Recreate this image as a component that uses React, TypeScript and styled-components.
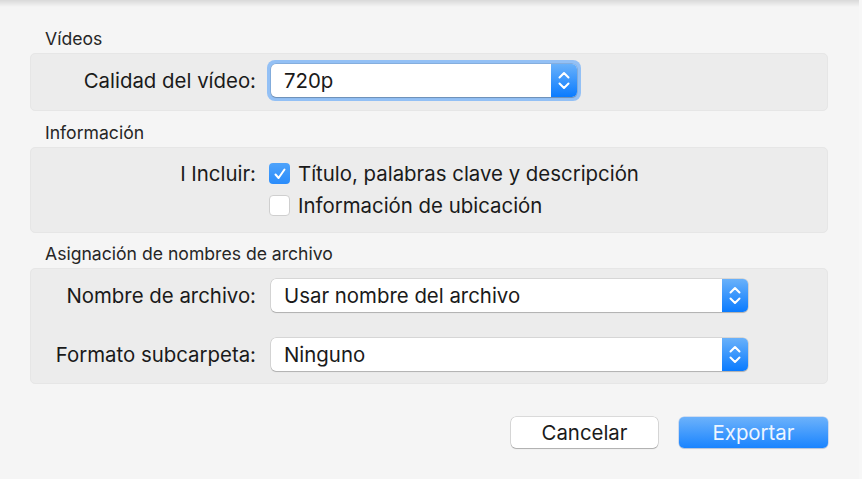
import React from "react";
import styled, { createGlobalStyle } from "styled-components";

const Global = createGlobalStyle`
  html, body { margin: 0; padding: 0; background: #f5f5f5; }
  body { font-family: "Inter", "Liberation Sans", sans-serif; color: #222; }
`;

const Window = styled.div`
  position: relative;
  width: 862px;
  height: 479px;
  box-sizing: border-box;
  background: #f5f5f5;
  padding: 29px 31px 0 30px;
  overflow: hidden;
  border-right: 3px solid #f7f7f7;
  &::before {
    content: "";
    position: absolute;
    left: 0; right: 0; top: 0;
    height: 7px;
    background: linear-gradient(#d9d9d9, rgba(245,245,245,0));
  }
`;

const SectionTitle = styled.div<{ $mt?: number }>`
  font-size: 17.6px;
  line-height: 20px;
  height: 20px;
  padding-left: 15px;
  margin-top: ${(p) => p.$mt ?? 0}px;
  margin-bottom: 4px;
  color: #262626;
`;

const Box = styled.div<{ $pt: number; $pb: number; $gap: number }>`
  background: #ececec;
  border: 1px solid #e6e6e6;
  border-radius: 5px;
  padding: ${(p) => p.$pt}px 0 ${(p) => p.$pb}px 0;
  display: grid;
  grid-template-columns: 225px 1fr;
  column-gap: 15px;
  row-gap: ${(p) => p.$gap}px;
  align-items: center;
`;

const Label = styled.div<{ $top?: boolean }>`
  font-size: 20.4px;
  line-height: ${(p) => (p.$top ? "21px" : "24px")};
  align-self: ${(p) => (p.$top ? "start" : "center")};
  text-align: right;
  color: #1a1a1a;
`;

const Ring = styled.div`
  width: 306px;
  padding: 4px;
  margin-left: -4px;
  border-radius: 8px;
  background: #93c0f5;
`;

const SelectBox = styled.div<{ $w?: number }>`
  box-sizing: border-box;
  display: flex;
  align-items: stretch;
  width: ${(p) => (p.$w ? `${p.$w}px` : "100%")};
  height: 33px;
  background: #fff;
  border-radius: 5px;
  box-shadow: 0 0 0 0.5px rgba(0,0,0,0.18), 0 1px 1px rgba(0,0,0,0.18);
  overflow: hidden;
`;

const SelectText = styled.div`
  flex: 1;
  font-size: 20.4px;
  line-height: 33px;
  padding-left: 13px;
  color: #1a1a1a;
`;

const Stepper = styled.div`
  width: 26px;
  display: flex;
  background: linear-gradient(#69b1fa, #0a7bff);
`;

const Checks = styled.div`
  display: flex;
  flex-direction: column;
  gap: 11px;
  margin-left: -2px;
`;

const CheckRow = styled.div`
  display: flex;
  align-items: center;
  gap: 8px;
  font-size: 20.4px;
  color: #1a1a1a;
  height: 21px;
`;

const Check = styled.div<{ $on?: boolean }>`
  box-sizing: border-box;
  flex: none;
  width: 21px;
  height: 21px;
  border-radius: 4px;
  display: flex;
  align-items: center;
  justify-content: center;
  background: ${(p) => (p.$on ? "linear-gradient(#4ea3fb, #2a8cfb)" : "#fff")};
  border: ${(p) => (p.$on ? "none" : "1px solid #cfcfcf")};
`;

const Footer = styled.div`
  display: flex;
  justify-content: flex-end;
  gap: 21px;
  margin-top: 33px;
`;

const Button = styled.div<{ $primary?: boolean }>`
  box-sizing: border-box;
  width: ${(p) => (p.$primary ? 149 : 147)}px;
  height: 31px;
  border-radius: 5px;
  font-size: 20.4px;
  line-height: 31px;
  text-align: center;
  color: ${(p) => (p.$primary ? "#eef5ff" : "#1a1a1a")};
  background: ${(p) => (p.$primary ? "linear-gradient(#6cb2fb, #1a84ff)" : "#fff")};
  box-shadow: ${(p) =>
    p.$primary
      ? "0 0 0 0.5px rgba(0,90,220,0.3), 0 1px 1px rgba(0,0,0,0.12)"
      : "0 0 0 0.5px rgba(0,0,0,0.22), 0 1px 1px rgba(0,0,0,0.2)"};
`;

const Chevrons = () => (
  <svg width="26" height="33" viewBox="0 0 26 33" fill="none">
    <path d="M8.5 13.5 L13 9 L17.5 13.5" stroke="#fff" strokeWidth="2" strokeLinecap="round" strokeLinejoin="round" />
    <path d="M8.5 19.5 L13 24 L17.5 19.5" stroke="#fff" strokeWidth="2" strokeLinecap="round" strokeLinejoin="round" />
  </svg>
);

const Tick = () => (
  <svg width="14" height="14" viewBox="0 0 14 14" fill="none">
    <path d="M2.5 7.5 L5.6 11 L11.5 2.5" stroke="#fff" strokeWidth="2" strokeLinecap="round" strokeLinejoin="round" />
  </svg>
);

const Select = ({ value, w }: { value: string; w?: number }) => (
  <SelectBox $w={w}>
    <SelectText>{value}</SelectText>
    <Stepper>
      <Chevrons />
    </Stepper>
  </SelectBox>
);

export default function App() {
  return (
    <>
      <Global />
      <Window>
        <SectionTitle>Vídeos</SectionTitle>
        <Box $pt={6} $pb={9} $gap={0}>
          <Label>Calidad del vídeo:</Label>
          <Ring>
            <Select value="720p" />
          </Ring>
        </Box>

        <SectionTitle $mt={12}>Información</SectionTitle>
        <Box $pt={15} $pb={16} $gap={0}>
          <Label $top>I Incluir:</Label>
          <Checks>
            <CheckRow>
              <Check $on>
                <Tick />
              </Check>
              Título, palabras clave y descripción
            </CheckRow>
            <CheckRow>
              <Check />
              Información de ubicación
            </CheckRow>
          </Checks>
        </Box>

        <SectionTitle $mt={11}>Asignación de nombres de archivo</SectionTitle>
        <Box $pt={10} $pb={12} $gap={26}>
          <Label>Nombre de archivo:</Label>
          <Select value="Usar nombre del archivo" w={477} />
          <Label>Formato subcarpeta:</Label>
          <Select value="Ninguno" w={477} />
        </Box>

        <Footer>
          <Button>Cancelar</Button>
          <Button $primary>Exportar</Button>
        </Footer>
      </Window>
    </>
  );
}
